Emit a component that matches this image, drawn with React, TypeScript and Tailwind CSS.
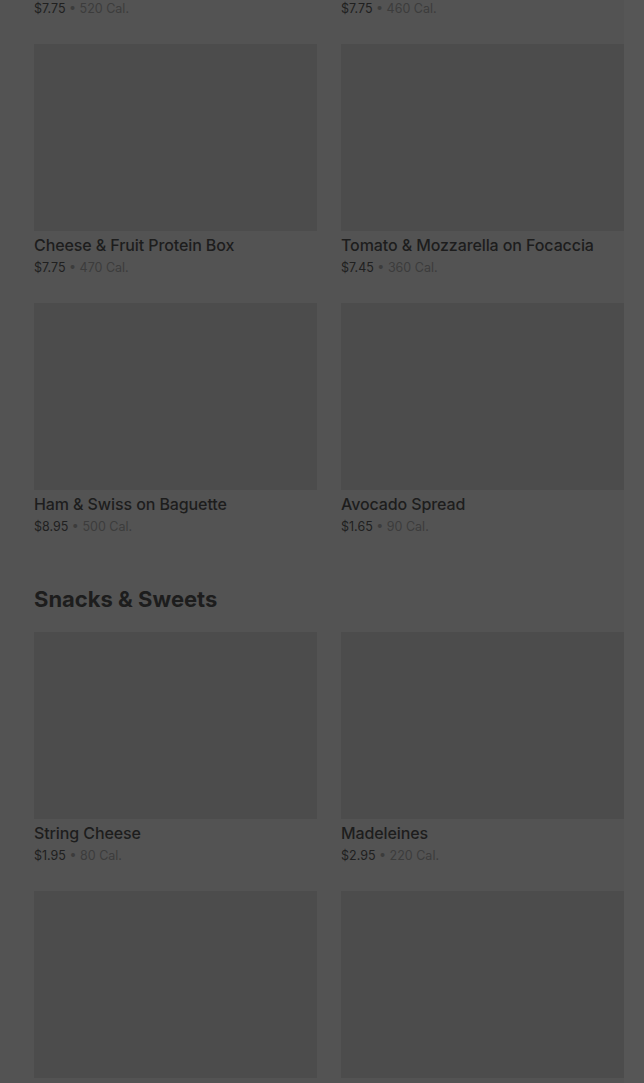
const sections = [
  {
    title: null as string | null,
    items: [
      { name: 'Turkey & Cheddar Sandwich', price: '$7.75', cal: '520 Cal.' },
      { name: 'Chicken Caesar Wrap', price: '$7.75', cal: '460 Cal.' },
      { name: 'Cheese & Fruit Protein Box', price: '$7.75', cal: '470 Cal.' },
      { name: 'Tomato & Mozzarella on Focaccia', price: '$7.45', cal: '360 Cal.' },
      { name: 'Ham & Swiss on Baguette', price: '$8.95', cal: '500 Cal.' },
      { name: 'Avocado Spread', price: '$1.65', cal: '90 Cal.' },
    ],
  },
  {
    title: 'Snacks & Sweets',
    items: [
      { name: 'String Cheese', price: '$1.95', cal: '80 Cal.' },
      { name: 'Madeleines', price: '$2.95', cal: '220 Cal.' },
      { name: 'Double Chocolate Chip Cookie (2 Pack)', price: '$3.45', cal: '380 Cal.' },
      { name: 'Chocolate Croissant Bites', price: '$2.45', cal: '250 Cal.' },
    ],
  },
]

function ItemCard({ name, price, cal }: { name: string; price: string; cal: string }) {
  return (
    <div className="flex flex-col">
      <div className="h-[187px] w-full bg-[#4c4c4c]" />
      <div className="mt-1 truncate text-[16px] leading-5 font-medium tracking-[-0.1px] text-[#1d1d1d]">{name}</div>
      <div className="mt-1 text-[12.5px] leading-[18px] text-[#3c3c3c]">
        <span className="text-[#202020]">{price}</span> • {cal}
      </div>
    </div>
  )
}

export default function App() {
  return (
    <div
      className="flex h-[1083px] w-[644px] overflow-hidden bg-[#535353]"
      style={{ fontFamily: 'Inter, "Liberation Sans", sans-serif' }}
    >
      <main className="flex-1 pl-[34px]">
        <div className="-mt-[215px]">
          {sections.map((section, i) => (
            <section key={i}>
              {section.title && (
                <h2 className="mt-[49px] mb-[19px] text-[22px] leading-7 font-bold text-[#1d1d1d]">
                  {section.title}
                </h2>
              )}
              <div className="grid grid-cols-2 gap-x-6 gap-y-[26px]">
                {section.items.map((item) => (
                  <ItemCard key={item.name} {...item} />
                ))}
              </div>
            </section>
          ))}
        </div>
      </main>
      <aside className="w-5 bg-[#565656]" />
    </div>
  )
}
